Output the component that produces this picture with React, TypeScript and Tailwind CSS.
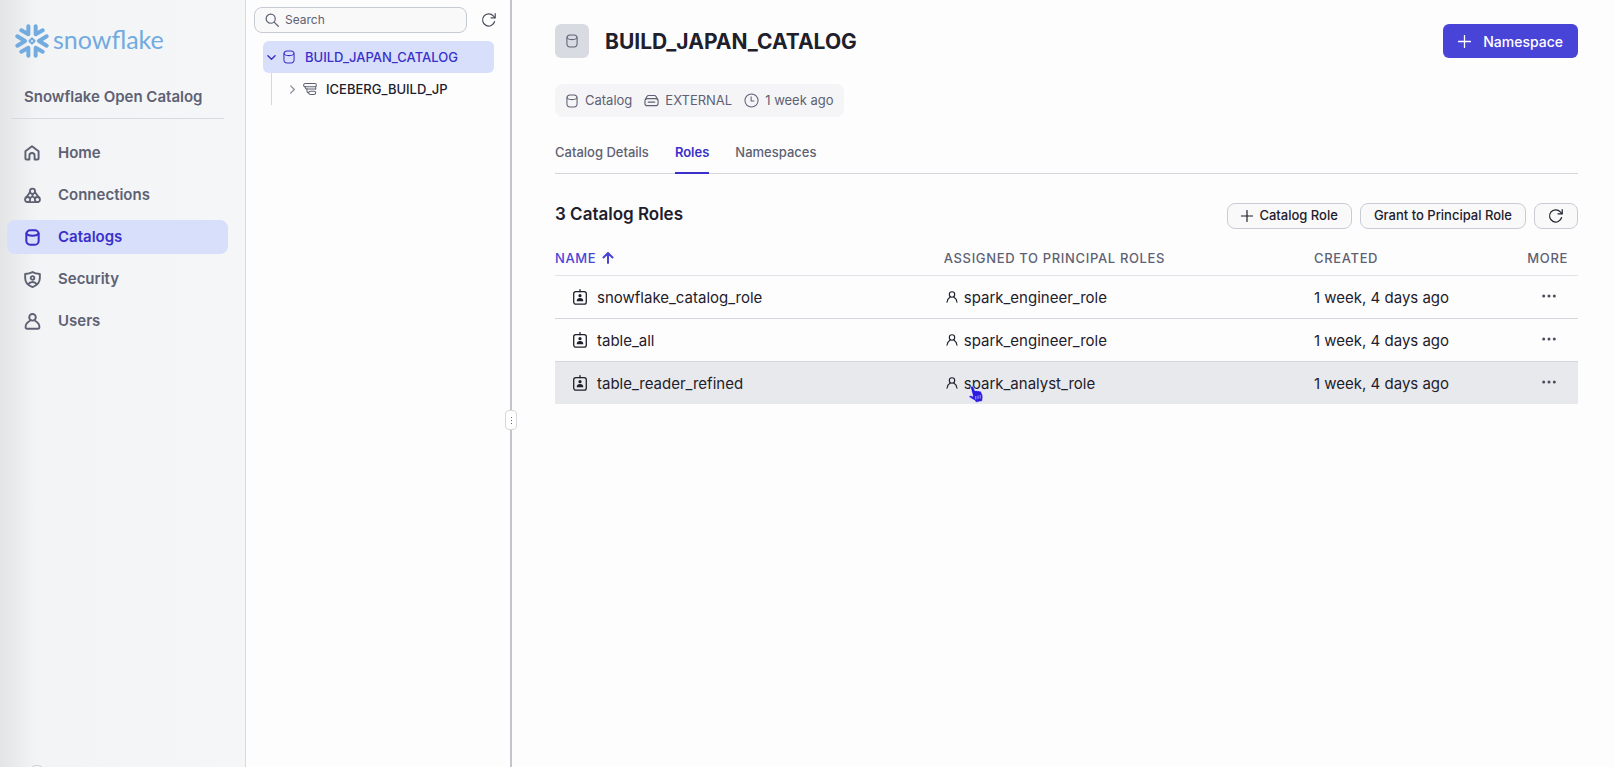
import React from "react";

type IconProps = { className?: string };

function Svg({ className, children, box = 16, stroke = 1.2 }: { className?: string; children: React.ReactNode; box?: number; stroke?: number }) {
  return (
    <svg viewBox={`0 0 ${box} ${box}`} className={className} fill="none" stroke="currentColor" strokeWidth={stroke} strokeLinecap="round" strokeLinejoin="round" aria-hidden="true">
      {children}
    </svg>
  );
}

function SnowflakeMark({ className }: IconProps) {
  return (
    <Svg className={className} box={102} stroke={12}>
      <path d="M40 7v24L19 19M62 7v24l21-12M40 95V71L19 83M62 95V71l21 12M7 37l23 14L7 65M95 37L72 51l23 14" />
      <path strokeWidth="6" d="M51 43l8 8-8 8-8-8z" />
    </Svg>
  );
}

function HomeIcon({ className }: IconProps) {
  return (
    <Svg className={className} stroke={1.9}>
      <path d="M1.400 6.300 8 1.200l6.600 5.100v7.200a1 1 0 0 1-1 1h-3V10.600a2.600 2.600 0 0 0-5.200 0v3.900h-3a1 1 0 0 1-1-1z" />
    </Svg>
  );
}

function ConnectionsIcon({ className }: IconProps) {
  return (
    <Svg className={className} stroke={1.7}>
      <circle cx="8" cy="4" r="2.400" />
      <circle cx="3.400" cy="11.800" r="2.400" />
      <circle cx="12.600" cy="11.800" r="2.400" />
      <path d="M5.700 4.800 2 9.800M10.300 4.800 14 9.800M3.400 14.200h9.200M8 6.400v2.400M8 8.800l-2.400 1.800M8 8.800l2.400 1.800" />
    </Svg>
  );
}

function CylinderIcon({ className, bold = false }: IconProps & { bold?: boolean }) {
  return (
    <Svg className={className} stroke={bold ? 1.9 : 1.2}>
      <rect x="2.200" y="1.200" width="11.600" height="13.600" rx="3.600" />
      <path d="M2.300 4.200c.6 1.500 2.800 2.200 5.700 2.200s5.100-.7 5.700-2.200" />
    </Svg>
  );
}

function SecurityIcon({ className }: IconProps) {
  return (
    <Svg className={className} stroke={1.8}>
      <path d="M8 1c2 1.100 4.200 1.600 6.900 1.800v3.800c0 4.300-2.500 7-6.900 8.500-4.400-1.500-6.900-4.200-6.900-8.500V2.800C3.800 2.600 6 2.100 8 1z" />
      <circle cx="8" cy="6.500" r="1.700" />
      <path d="M4.200 12.200c.7-1.300 2-1.900 3.800-1.900s3.100.6 3.800 1.900" />
    </Svg>
  );
}

function UserIcon({ className }: IconProps) {
  return (
    <Svg className={className} stroke={1.8}>
      <circle cx="8" cy="4.100" r="3.100" />
      <path d="M5.600 7.300C3.100 8.700 1.500 10.800 1.500 13.100c0 1 .6 1.700 1.600 1.700h9.800c1 0 1.600-.7 1.600-1.700 0-2.300-1.600-4.400-4.100-5.800" />
    </Svg>
  );
}

function RoleUserIcon({ className }: IconProps) {
  return (
    <Svg className={className} box={12} stroke={1.1}>
      <circle cx="6" cy="3.500" r="2.700" />
      <path d="M1 11.300c.3-2.400 1.300-4.200 3.200-5.300M11 11.300C10.700 8.900 9.700 7.100 7.800 6" />
    </Svg>
  );
}

function BadgeIcon({ className }: IconProps) {
  return (
    <Svg className={className} stroke={1.300}>
      <rect x="1.700" y="2.600" width="12.600" height="12.600" rx="2.200" />
      <path d="M8 .7v2" />
      <circle cx="8" cy="6.700" r="1.600" fill="currentColor" stroke="none" />
      <path d="M4.700 12.200c0-1.900 1.200-3.100 3.300-3.100s3.300 1.200 3.300 3.100z" fill="currentColor" stroke="none" />
    </Svg>
  );
}

function NamespaceIcon({ className }: IconProps) {
  return (
    <Svg className={className} stroke={1.200}>
      <rect x=".7" y="1.800" width="14.600" height="3.600" rx="1.800" />
      <rect x="4.500" y="8" width="10" height="0.100" rx="0" />
      <rect x="6.500" y="10.600" width="8" height="3.600" rx="1.800" />
      <path d="M2.500 5.400v.6a2 2 0 0 0 2 2M4.500 8v2.400a2 2 0 0 0 2 2M14.500 5.400V8" />
    </Svg>
  );
}

function DriveIcon({ className }: IconProps) {
  return (
    <Svg className={className}>
      <rect x="1" y="6" width="14" height="7.500" rx="2.400" />
      <path d="M1.400 7 3.200 3.700A2 2 0 0 1 5 2.700h6a2 2 0 0 1 1.800 1L14.600 7M4.500 9.700h7" />
    </Svg>
  );
}

function ClockIcon({ className }: IconProps) {
  return (
    <Svg className={className} stroke={1.100}>
      <circle cx="8" cy="8" r="7" />
      <path d="M7.600 4v4.500h3" />
    </Svg>
  );
}

function RefreshIcon({ className }: IconProps) {
  return (
    <Svg className={className} stroke={1.200}>
      <path d="M13.600 9.500A6.100 6.100 0 1 1 12.300 3.900L14 5.600" />
      <path d="M14.200 1.700v4.100H10" />
    </Svg>
  );
}

function PlusIcon({ className }: IconProps) {
  return (
    <Svg className={className} box={12} stroke={1.200}>
      <path d="M6 .5v11M.5 6h11" />
    </Svg>
  );
}

function HandPointer({ className }: IconProps) {
  return (
    <svg viewBox="0 0 16 18" className={className} aria-hidden="true">
      <path
        d="M3.500 1.200c.8-.3 1.600 0 1.900.8l1.700 4c.3-.7 1.700-.8 2.100.1.400-.7 1.700-.6 2.100.2.500-.5 1.600-.3 1.900.5l1.200 2.900c.6 1.600.5 2.600.2 4l-.4 2.600-6.300 1.100-.9-1.700-5-2.900c-1.500-1-.7-2.600.6-2.300l2.300.8L2.700 3c-.3-.8 0-1.500.8-1.800z"
        fill="#2c1be0"
        stroke="#f4f4ff"
        strokeWidth=".6"
      />
      <path d="M7.800 11v3.500M10 10.500v3.500M12.200 10v3.500" stroke="#c9c6fa" strokeWidth=".8" />
    </svg>
  );
}

const NAV = [
  { label: "Home", icon: <HomeIcon className="size-4" /> },
  { label: "Connections", icon: <ConnectionsIcon className="size-[17px]" /> },
  { label: "Catalogs", icon: <CylinderIcon className="size-[17px]" bold />, active: true },
  { label: "Security", icon: <SecurityIcon className="size-[17px]" /> },
  { label: "Users", icon: <UserIcon className="size-[17px]" /> },
];

const ROLES = [
  { name: "snowflake_catalog_role", principal: "spark_engineer_role", created: "1 week, 4 days ago" },
  { name: "table_all", principal: "spark_engineer_role", created: "1 week, 4 days ago" },
  { name: "table_reader_refined", principal: "spark_analyst_role", created: "1 week, 4 days ago", hovered: true },
];

function Sidebar() {
  return (
    <aside className="relative w-[246px] shrink-0 overflow-hidden border-r border-[#d9dadf] bg-linear-to-r from-[#e3e4e6] via-[#f3f4f6] via-15% to-[#f5f6f8]">
      <a href="#" className="mt-6 ml-[15px] flex h-[34px] items-center gap-1 text-[#71abe0]">
        <SnowflakeMark className="size-[34px]" />
        <span className="pb-1 font-[Lato] text-[25px] leading-8">snowflake</span>
      </a>
      <div className="mt-6 mr-[21px] ml-[11px] border-b border-[#d9dadf] px-[13px] pt-[5px] pb-[11px]">
        <p className="text-[15px] leading-5 font-semibold text-[#5d6173]">Snowflake Open Catalog</p>
      </div>
      <nav className="mt-[17px] mr-[17px] ml-[7px] flex flex-col gap-2">
        {NAV.map((item) => (
          <a
            key={item.label}
            href="#"
            aria-current={item.active ? "page" : undefined}
            className={`flex h-[34px] items-center rounded-lg px-[17px] text-[15px] font-semibold ${item.active ? "bg-[#d7dffa] text-[#3a2fc9]" : "text-[#5d6173]"}`}
          >
            <span className="flex w-[34px] items-center">{item.icon}</span>
            {item.label}
          </a>
        ))}
      </nav>
      <span className="absolute -bottom-4 left-7 size-[18px] rounded-full border border-[#c9cace] bg-white" />
    </aside>
  );
}

function CatalogTree() {
  return (
    <section className="relative w-[266px] shrink-0 border-r-2 border-[#c3c5cb] pt-[7px] pl-2">
      <div className="flex items-center gap-[14px]">
        <label className="flex h-[26px] w-[213px] items-center gap-1.5 rounded-lg border border-[#c6cad3] bg-[#f9f9fa] px-2.5">
          <Svg className="size-[14px] shrink-0 text-[#5d6173]" stroke={1.400}>
            <circle cx="6.500" cy="6.500" r="5.200" />
            <path d="m10.500 10.500 4.700 4.700" />
          </Svg>
          <input type="text" placeholder="Search" aria-label="Search" className="min-w-0 flex-1 bg-transparent text-[12px] outline-none placeholder:text-[#5d6173]" />
        </label>
        <button type="button" aria-label="Refresh" className="text-[#4a4d5c]">
          <RefreshIcon className="size-4" />
        </button>
      </div>
      <ul className="mt-2 mr-4 ml-[9px] text-[13px] font-medium">
        <li>
          <button type="button" aria-expanded="true" className="flex h-8 w-full items-center rounded-md bg-[#d7dffa] px-1 text-[#3a2fc9]">
            <Svg className="size-[9px]" box={10} stroke={1.600}>
              <path d="m1 3 4 4 4-4" />
            </Svg>
            <CylinderIcon className="ml-1.5 size-[14px]" />
            <span className="ml-[9px] pt-0.5">BUILD_JAPAN_CATALOG</span>
          </button>
          <ul className="ml-2 border-l border-[#d5d7dd]">
            <li>
              <button type="button" aria-expanded="false" className="flex h-8 w-full items-center pl-4 text-[#1e202c]">
                <Svg className="size-[9px] text-[#8a8d9a]" box={10} stroke={1.400}>
                  <path d="m3 1 4 4-4 4" />
                </Svg>
                <NamespaceIcon className="ml-1.5 size-[14px] text-[#5d6173]" />
                <span className="ml-[9px] pt-0.5">ICEBERG_BUILD_JP</span>
              </button>
            </li>
          </ul>
        </li>
      </ul>
      <button type="button" aria-label="Resize panel" className="absolute top-[410px] -right-[7px] flex h-5 w-3 flex-col items-center justify-center gap-0.5 rounded border border-[#d5d7dd] bg-white">
        <span className="size-px bg-[#5d6173]" />
        <span className="size-px bg-[#5d6173]" />
        <span className="size-px bg-[#5d6173]" />
      </button>
    </section>
  );
}

function RolesTable() {
  return (
    <table className="mt-3 w-full table-fixed text-left">
      <thead>
        <tr className="h-[33px] border-b border-[#e2e3e8] text-[13px] tracking-wider text-[#5d6173]">
          <th className="w-[38%] font-medium text-[#4844d8]" aria-sort="ascending">
            <button type="button" className="flex items-center gap-1.5 tracking-wider">
              NAME
              <Svg className="size-3" box={12} stroke={2}>
                <path d="M6 11V1.200M1.500 5.500 6 1l4.500 4.500" />
              </Svg>
            </button>
          </th>
          <th className="w-[36%] font-medium">ASSIGNED TO PRINCIPAL ROLES</th>
          <th className="w-[17%] pl-[2px] font-medium">CREATED</th>
          <th className="w-[9%] pr-2.5 text-right font-medium">MORE</th>
        </tr>
      </thead>
      <tbody className="text-[15px] text-[#1e202c]">
        {ROLES.map((role) => (
          <tr key={role.name} className={`h-[43px] border-b border-[#d5d7dd] last:border-b-0 ${role.hovered ? "bg-[#e8e9ed]" : ""}`}>
            <td className="pt-[3px]">
              <span className="flex items-center gap-[9px] pl-[17px]">
                <BadgeIcon className="mb-[3px] size-4" />
                {role.name}
              </span>
            </td>
            <td className="pt-[3px]">
              <span className="relative flex items-center gap-1.5 pl-[2px]">
                <RoleUserIcon className="mb-[3px] size-3" />
                {role.principal}
                {role.hovered && <HandPointer className="absolute top-3 left-6 h-[18px] w-4" />}
              </span>
            </td>
            <td className="pt-[3px] pl-[2px]">{role.created}</td>
            <td className="pr-[22px] pb-0.5 text-right">
              <button type="button" aria-label={`More actions for ${role.name}`} className="align-middle text-[#4a4d5c]">
                <svg viewBox="0 0 14 4" className="h-1 w-[14px]" fill="currentColor" aria-hidden="true">
                  <circle cx="1.700" cy="2" r="1.500" />
                  <circle cx="7" cy="2" r="1.500" />
                  <circle cx="12.300" cy="2" r="1.500" />
                </svg>
              </button>
            </td>
          </tr>
        ))}
      </tbody>
    </table>
  );
}

const smallButton = "flex h-[26px] items-center rounded-lg border border-[#c9ccd5] bg-[#f9f9fa] px-[13px]";

export default function App() {
  return (
    <div className="flex min-h-screen bg-[#fdfdfe] font-[Inter,sans-serif]">
      <Sidebar />
      <CatalogTree />
      <main className="min-w-0 flex-1 pt-6 pr-[37px] pl-[43px]">
        <header className="flex items-center">
          <span className="flex size-[34px] items-center justify-center rounded-md bg-[#d9dbe2] text-[#5d6173]">
            <CylinderIcon className="size-[14px]" />
          </span>
          <h1 className="ml-4 pt-0.5 text-[21px] leading-8 font-bold text-[#1e202c]">BUILD_JAPAN_CATALOG</h1>
          <button type="button" className="ml-auto flex h-[34px] items-center gap-3 rounded-md bg-[#4844d8] px-[15px] text-[14px] font-medium text-white">
            <PlusIcon className="size-[13px]" />
            Namespace
          </button>
        </header>

        <div className="mt-[26px] flex h-[33px] w-fit items-center gap-3 rounded-lg bg-[#f5f5f7] px-2.5 text-[13px] text-[#5d6173]">
          <span className="flex items-center gap-1.5">
            <CylinderIcon className="size-[14px]" />
            Catalog
          </span>
          <span className="flex items-center gap-1.5">
            <DriveIcon className="size-[15px]" />
            EXTERNAL
          </span>
          <span className="flex items-center gap-1.5">
            <ClockIcon className="size-[15px]" />1 week ago
          </span>
        </div>

        <div role="tablist" className="mt-5 flex gap-[26px] border-b border-[#d5d7dd] text-[13px] font-medium text-[#5d6173]">
          <button type="button" role="tab" aria-selected="false" className="h-9 pb-1">
            Catalog Details
          </button>
          <button type="button" role="tab" aria-selected="true" className="-mb-px h-[37px] border-b-2 border-[#3a2fc9] pb-[3px] font-semibold text-[#3a2fc9]">
            Roles
          </button>
          <button type="button" role="tab" aria-selected="false" className="h-9 pb-1">
            Namespaces
          </button>
        </div>

        <div className="mt-7 flex items-center">
          <h2 className="pb-1 text-[17px] leading-6 font-semibold text-[#1e202c]">3 Catalog Roles</h2>
          <div className="ml-auto flex gap-2 text-[13px] font-medium text-[#1e202c]">
            <button type="button" className={`${smallButton} gap-1.5`}>
              <PlusIcon className="size-3" />
              Catalog Role
            </button>
            <button type="button" className={smallButton}>
              Grant to Principal Role
            </button>
            <button type="button" aria-label="Refresh roles" className={smallButton}>
              <RefreshIcon className="size-4" />
            </button>
          </div>
        </div>

        <RolesTable />
      </main>
    </div>
  );
}
